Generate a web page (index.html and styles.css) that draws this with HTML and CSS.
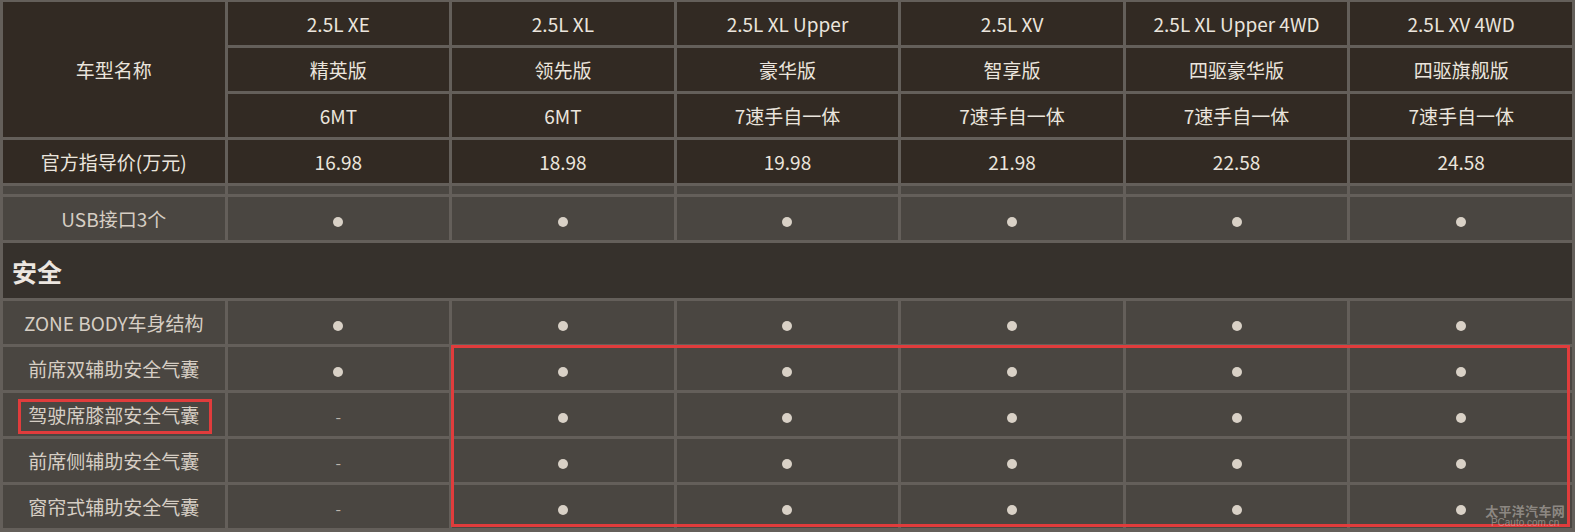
FILE: index.html
```html
<!DOCTYPE html>
<html lang="zh-CN">
<head>
<meta charset="utf-8">
<title>配置表</title>
<link rel="stylesheet" href="styles.css">
</head>
<body>
<div class="sheet">
  <table class="spec">
    <colgroup>
      <col class="c-name"><col><col><col><col><col><col>
    </colgroup>
    <tbody>
      <tr class="head">
        <td rowspan="3">车型名称</td>
        <td>2.5L XE</td><td>2.5L XL</td><td>2.5L XL Upper</td><td>2.5L XV</td><td>2.5L XL Upper 4WD</td><td>2.5L XV 4WD</td>
      </tr>
      <tr class="head">
        <td>精英版</td><td>领先版</td><td>豪华版</td><td>智享版</td><td>四驱豪华版</td><td>四驱旗舰版</td>
      </tr>
      <tr class="head">
        <td>6MT</td><td>6MT</td><td>7速手自一体</td><td>7速手自一体</td><td>7速手自一体</td><td>7速手自一体</td>
      </tr>
      <tr class="head">
        <td>官方指导价(万元)</td>
        <td>16.98</td><td>18.98</td><td>19.98</td><td>21.98</td><td>22.58</td><td>24.58</td>
      </tr>
      <tr class="gap">
        <td></td><td></td><td></td><td></td><td></td><td></td><td></td>
      </tr>
      <tr class="row">
        <td>USB接口3个</td>
        <td><span class="dot"></span></td><td><span class="dot"></span></td><td><span class="dot"></span></td><td><span class="dot"></span></td><td><span class="dot"></span></td><td><span class="dot"></span></td>
      </tr>
      <tr class="section">
        <td colspan="7">安全</td>
      </tr>
      <tr class="row">
        <td>ZONE BODY车身结构</td>
        <td><span class="dot"></span></td><td><span class="dot"></span></td><td><span class="dot"></span></td><td><span class="dot"></span></td><td><span class="dot"></span></td><td><span class="dot"></span></td>
      </tr>
      <tr class="row">
        <td>前席双辅助安全气囊</td>
        <td><span class="dot"></span></td><td><span class="dot"></span></td><td><span class="dot"></span></td><td><span class="dot"></span></td><td><span class="dot"></span></td><td><span class="dot"></span></td>
      </tr>
      <tr class="row">
        <td>驾驶席膝部安全气囊</td>
        <td><span class="dash">-</span></td><td><span class="dot"></span></td><td><span class="dot"></span></td><td><span class="dot"></span></td><td><span class="dot"></span></td><td><span class="dot"></span></td>
      </tr>
      <tr class="row">
        <td>前席侧辅助安全气囊</td>
        <td><span class="dash">-</span></td><td><span class="dot"></span></td><td><span class="dot"></span></td><td><span class="dot"></span></td><td><span class="dot"></span></td><td><span class="dot"></span></td>
      </tr>
      <tr class="row">
        <td>窗帘式辅助安全气囊</td>
        <td><span class="dash">-</span></td><td><span class="dot"></span></td><td><span class="dot"></span></td><td><span class="dot"></span></td><td><span class="dot"></span></td><td><span class="dot"></span></td>
      </tr>
    </tbody>
  </table>
  <div class="mark mark-label"></div>
  <div class="mark mark-cells"></div>
  <div class="watermark">
    <span class="wm-cn">太平洋汽车网</span>
    <span class="wm-en">PCauto.com.cn</span>
  </div>
</div>
</body>
</html>
```
FILE: styles.css
```css
html, body {
  margin: 0;
  padding: 0;
  background: #645f5a;
}

.sheet {
  position: relative;
  width: 1575px;
  height: 532px;
  overflow: hidden;
}

.spec {
  width: 1575px;
  table-layout: fixed;
  border-collapse: separate;
  border-spacing: 3px;
  background: #645f5a;
  margin-top: -1px;
  font-family: "Noto Sans CJK SC", "Noto Sans", sans-serif;
  font-size: 19px;
  text-align: center;
}

.spec td {
  padding: 0;
  height: 43px;
  vertical-align: middle;
  white-space: nowrap;
  overflow: hidden;
}

.head td {
  background: #322a23;
  color: #ebe5dd;
}

.gap td {
  height: 8px;
  background: #4b4742;
}

.row td {
  background: #4a4641;
  color: #d6cec4;
}

.section td {
  height: 55px;
  background: #36312c;
  color: #ece6e0;
  text-align: left;
  padding-left: 9px;
  font-size: 25px;
  font-weight: 700;
}

.dot {
  display: inline-block;
  width: 10px;
  height: 10px;
  border-radius: 50%;
  background: #d9d1c6;
  vertical-align: middle;
}

.dash {
  color: #bdb5ab;
  font-size: 16px;
}

.mark {
  position: absolute;
  border: 3px solid #e03c3c;
  box-sizing: border-box;
}

.mark-label {
  left: 18px;
  top: 399px;
  width: 194px;
  height: 35px;
}

.mark-cells {
  left: 451px;
  top: 345px;
  width: 1119px;
  height: 182px;
}

.watermark {
  position: absolute;
  right: 10px;
  bottom: 4px;
  display: flex;
  flex-direction: column;
  align-items: center;
  color: rgba(200, 194, 188, 0.55);
  font-family: "Noto Sans CJK SC", "Noto Sans", sans-serif;
  line-height: 1;
}

.wm-cn {
  font-size: 13px;
  font-weight: 700;
  letter-spacing: 0.3px;
}

.wm-en {
  font-family: "Liberation Sans", Arial, sans-serif;
  font-size: 10px;
  margin-top: 1px;
}
```
